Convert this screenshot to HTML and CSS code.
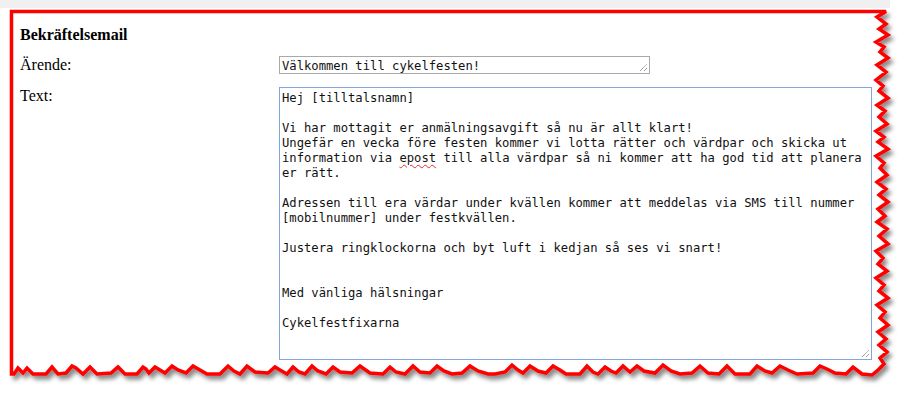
FILE: index.html
```html
<!DOCTYPE html>
<html lang="sv">
<head>
    <meta charset="UTF-8">
    <meta name="viewport" content="width=device-width, initial-scale=1.0">
    <title>Bekräftelsemail</title>
    <link rel="stylesheet" href="styles.css">
</head>
<body>
    <div class="page">
        <!-- torn paper edge with shadow -->
        <svg class="torn-edge" width="907" height="395" viewBox="0 0 907 395">
            <defs>
                <filter id="shadow" x="-5%" y="-5%" width="110%" height="115%">
                    <feDropShadow dx="3" dy="4" stdDeviation="2.2" flood-color="#000" flood-opacity="0.45"/>
                </filter>
            </defs>
            <path filter="url(#shadow)" fill="#fff" stroke="#ff0000" stroke-width="3.5" stroke-linejoin="miter" stroke-miterlimit="3"
                d="M11.5,11.5 L886,11.5
                   L877,17 886,24 879,29 888,35 876,42 884,47 880,52 888,58 877,65 886,72 876,80 883,86 879,91 888,98
                   877,105 885,111 879,117 887,124 876,131 884,137 878,142 888,149 876,156 884,163 880,168 887,175
                   877,182 886,189 879,195 888,202 878,209 885,216 877,222 887,229 879,236 888,244 876,251 883,258
                   878,264 887,271 876,278 884,285 879,291 888,298 877,305 885,312 880,318 888,325 878,332 886,339
                   879,345 887,352 880,358 884,364 878,370 872,375
                   862,374 853,367 846,374 835,373 827,369 820,366 813,373 797,374 788,370 780,366 772,373 765,371
                   757,366 750,374 735,374 727,366 719,374 708,373 700,366 692,373 680,374 671,371 663,365 655,373
                   644,371 637,366 630,372 623,366 616,373 611,371 605,367 598,374 593,372 587,366 580,374 566,374
                   560,370 553,366 546,373 538,371 530,366 523,373 518,370 512,365 505,372 495,374 488,374 478,371
                   470,366 462,373 452,374 444,371 437,366 430,373 420,372 413,366 405,374 396,372 390,367 383,374
                   370,373 360,366 352,373 340,372 333,367 326,374 318,371 312,366 305,374 299,372 293,367 287,374
                   280,370 275,367 268,373 255,372 247,366 240,374 234,371 228,366 220,374 207,374 200,370 193,366
                   186,373 178,370 172,366 165,373 160,370 155,367 149,373 146,369 143,367 137,374 125,374 118,367
                   111,373 97,374 90,367 83,374 76,368 72,366 66,373 58,374 52,367 46,374 33,374 27,368 23,373
                   18,368 14,374 11.5,374 Z"/>
        </svg>

        <div class="content">
            <h1 class="title">Bekräftelsemail</h1>
            <div class="form">
                <div class="label">Ärende:</div>
                <div class="field field-subject">Välkommen till cykelfesten!<svg class="grip" width="9" height="9" viewBox="0 0 9 9"><path d="M1,8 L8,1 M5,8 L8,5" stroke="#7a7a7a" stroke-width="1" stroke-dasharray="1 0.6"/></svg></div>

                <div class="label">Text:</div>
                <div class="field field-body">Hej [tilltalsnamn]

Vi har mottagit er anmälningsavgift så nu är allt klart!
Ungefär en vecka före festen kommer vi lotta rätter och värdpar och skicka ut information via <span class="misspelt">epost</span> till alla värdpar så ni kommer att ha god tid att planera er rätt.

Adressen till era värdar under kvällen kommer att meddelas via SMS till nummer [mobilnummer] under festkvällen.

Justera ringklockorna och byt luft i kedjan så ses vi snart!


Med vänliga hälsningar

Cykelfestfixarna<svg class="grip" width="9" height="9" viewBox="0 0 9 9"><path d="M1,8 L8,1 M5,8 L8,5" stroke="#7a7a7a" stroke-width="1" stroke-dasharray="1 0.6"/></svg></div>
            </div>
        </div>
    </div>
</body>
</html>
```

FILE: styles.css
```css
/* General Reset */
* {
    margin: 0;
    padding: 0;
    box-sizing: border-box;
}
body {
    background: #fff;
    font-family: 'Liberation Serif', 'Times New Roman', serif;
    color: #000;
}
.page {
    position: relative;
    width: 907px;
    height: 395px;
    overflow: hidden;
    background: linear-gradient(#f0f0f0, #f0f0f0) no-repeat 0 0 / 890px 8px;
}
.torn-edge {
    position: absolute;
    left: 0;
    top: 0;
    z-index: 0;
}
.content {
    position: relative;
    z-index: 1;
    padding: 26px 0 0 20px;
}
.title {
    font-size: 16px;
    line-height: 18px;
    font-weight: bold;
    margin-bottom: 12px;
}
.form {
    display: grid;
    grid-template-columns: 259px 593px;
    row-gap: 13px;
    align-items: start;
}
.label {
    font-size: 16px;
    line-height: 18px;
}
.field {
    position: relative;
    font-family: 'DejaVu Sans Mono', 'Liberation Mono', monospace;
    font-size: 12.2px;
    color: #111;
    background: #fff;
    white-space: pre-wrap;
    overflow: hidden;
}
.field-subject {
    width: 371px;
    height: 18px;
    border: 1px solid #a9a9a9;
    padding: 2px 2px 0;
    line-height: 14px;
}
.field-body {
    width: 593px;
    height: 273px;
    border: 1px solid #82a5da;
    padding: 3px 2px 0;
    line-height: 15px;
}
.misspelt {
    text-decoration: underline wavy #e03030;
    text-decoration-thickness: 1px;
    text-underline-offset: 2px;
}
.grip {
    position: absolute;
    right: 1px;
    bottom: 1px;
}
```
